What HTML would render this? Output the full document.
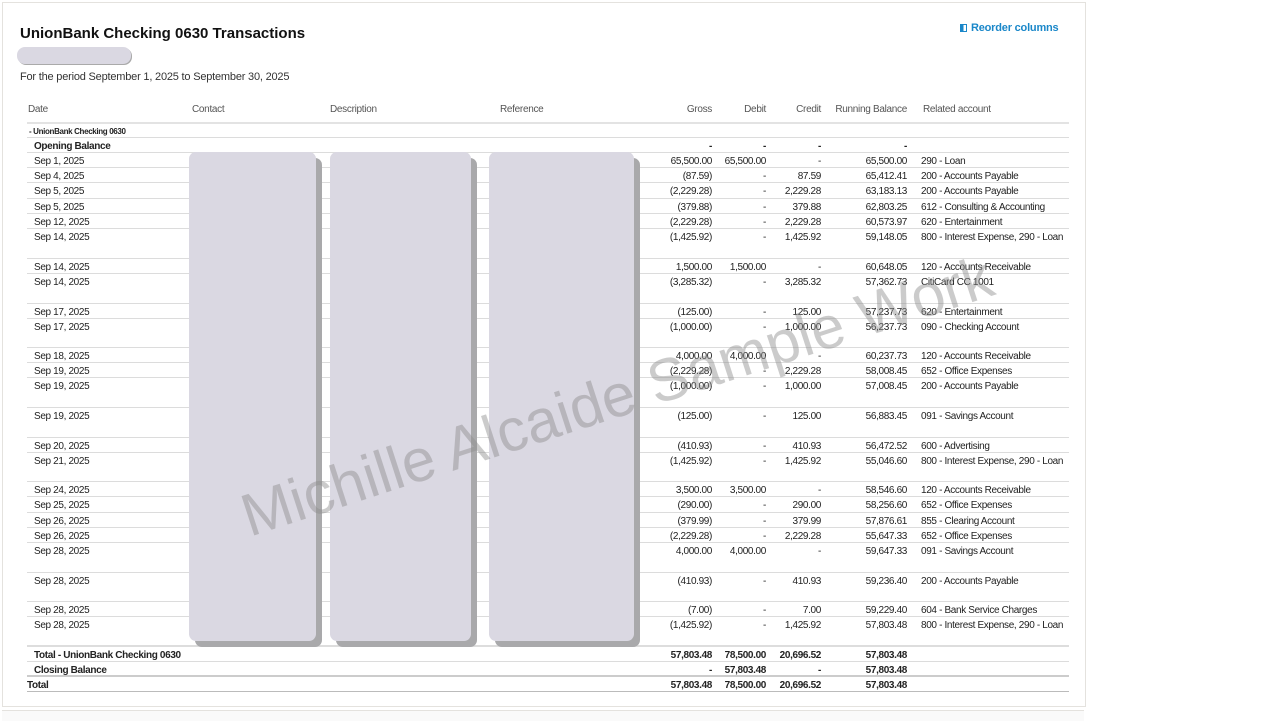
<!DOCTYPE html>
<html><head><meta charset="utf-8"><style>
body{margin:0;width:1280px;height:720px;background:#fff;font-family:"Liberation Sans",Arial,sans-serif;position:relative;overflow:hidden;color:#222}
.card{position:absolute;left:2px;top:2px;width:1082px;height:703px;border:1px solid #e4e2de;background:#fff}
.bot{position:absolute;left:2px;top:710px;width:1082px;height:10px;border-top:1px solid #e4e2de;background:#fafafa}
.t{position:absolute;white-space:nowrap}
.r{position:absolute;left:27px;width:1042px;box-sizing:border-box;border-bottom:1px solid #dcdcdc;font-size:10px;letter-spacing:-0.35px;line-height:14px}
.r span{position:absolute;top:2px;white-space:nowrap}
.d{left:7px}.g{left:613px;width:72px;text-align:right}.db{left:689px;width:50px;text-align:right}.c{left:744px;width:50px;text-align:right}.rb{left:813px;width:67px;text-align:right}.a{left:894px}
.b{font-weight:bold}
.h{position:absolute;top:104px;font-size:10px;color:#555;letter-spacing:-0.3px}
.blk{position:absolute;background:#dad8e2;border-radius:7px;box-shadow:6px 6px 0 #a9a9ab}
</style></head><body>
<div class="card"></div><div class="bot"></div>
<div class="t" style="left:20px;top:25px;font-size:15px;font-weight:bold;color:#111">UnionBank Checking 0630 Transactions</div>
<div style="position:absolute;left:17px;top:47px;width:114px;height:17px;background:#dad8e2;border-radius:8px;box-shadow:1px 1px 0 #aaa"></div>
<div class="t" style="left:20px;top:71px;font-size:11px;color:#333;letter-spacing:-0.2px">For the period September 1, 2025 to September 30, 2025</div>
<div class="t" style="left:960px;top:22px;font-size:11px;color:#1a87c9;font-weight:bold;letter-spacing:-0.2px"><span style="display:inline-block;width:7px;height:8px;border:1px solid #1a87c9;background:linear-gradient(90deg,#1a87c9 50%,#fff 50%);box-sizing:border-box;margin-right:4px;vertical-align:-1px"></span>Reorder columns</div>
<div class="h" style="left:28px">Date</div><div class="h" style="left:192px">Contact</div><div class="h" style="left:330px">Description</div><div class="h" style="left:500px">Reference</div>
<div class="h" style="left:640px;width:72px;text-align:right">Gross</div><div class="h" style="left:716px;width:50px;text-align:right">Debit</div><div class="h" style="left:771px;width:50px;text-align:right">Credit</div><div class="h" style="left:830px;width:77px;text-align:right">Running Balance</div><div class="h" style="left:923px">Related account</div>
<div style="position:absolute;left:27px;top:122px;width:1042px;height:2px;background:#e3e3e3"></div>
<div class="r b" style="top:124px;height:14px;font-size:8px;line-height:12px"><span style="left:2px">- UnionBank Checking 0630</span></div>
<div class="r b" style="top:138px;height:15px"><span class="d">Opening Balance</span><span class="g">-</span><span class="db">-</span><span class="c">-</span><span class="rb">-</span></div>
<div class="r" style="top:153px;height:15px"><span class="d">Sep 1, 2025</span><span class="g">65,500.00</span><span class="db">65,500.00</span><span class="c">-</span><span class="rb">65,500.00</span><span class="a">290 - Loan</span></div>
<div class="r" style="top:168px;height:15px"><span class="d">Sep 4, 2025</span><span class="g">(87.59)</span><span class="db">-</span><span class="c">87.59</span><span class="rb">65,412.41</span><span class="a">200 - Accounts Payable</span></div>
<div class="r" style="top:183px;height:16px"><span class="d">Sep 5, 2025</span><span class="g">(2,229.28)</span><span class="db">-</span><span class="c">2,229.28</span><span class="rb">63,183.13</span><span class="a">200 - Accounts Payable</span></div>
<div class="r" style="top:199px;height:15px"><span class="d">Sep 5, 2025</span><span class="g">(379.88)</span><span class="db">-</span><span class="c">379.88</span><span class="rb">62,803.25</span><span class="a">612 - Consulting &amp; Accounting</span></div>
<div class="r" style="top:214px;height:15px"><span class="d">Sep 12, 2025</span><span class="g">(2,229.28)</span><span class="db">-</span><span class="c">2,229.28</span><span class="rb">60,573.97</span><span class="a">620 - Entertainment</span></div>
<div class="r" style="top:229px;height:30px"><span class="d">Sep 14, 2025</span><span class="g">(1,425.92)</span><span class="db">-</span><span class="c">1,425.92</span><span class="rb">59,148.05</span><span class="a">800 - Interest Expense, 290 - Loan</span></div>
<div class="r" style="top:259px;height:15px"><span class="d">Sep 14, 2025</span><span class="g">1,500.00</span><span class="db">1,500.00</span><span class="c">-</span><span class="rb">60,648.05</span><span class="a">120 - Accounts Receivable</span></div>
<div class="r" style="top:274px;height:30px"><span class="d">Sep 14, 2025</span><span class="g">(3,285.32)</span><span class="db">-</span><span class="c">3,285.32</span><span class="rb">57,362.73</span><span class="a">CitiCard CC 1001</span></div>
<div class="r" style="top:304px;height:15px"><span class="d">Sep 17, 2025</span><span class="g">(125.00)</span><span class="db">-</span><span class="c">125.00</span><span class="rb">57,237.73</span><span class="a">620 - Entertainment</span></div>
<div class="r" style="top:319px;height:29px"><span class="d">Sep 17, 2025</span><span class="g">(1,000.00)</span><span class="db">-</span><span class="c">1,000.00</span><span class="rb">56,237.73</span><span class="a">090 - Checking Account</span></div>
<div class="r" style="top:348px;height:15px"><span class="d">Sep 18, 2025</span><span class="g">4,000.00</span><span class="db">4,000.00</span><span class="c">-</span><span class="rb">60,237.73</span><span class="a">120 - Accounts Receivable</span></div>
<div class="r" style="top:363px;height:15px"><span class="d">Sep 19, 2025</span><span class="g">(2,229.28)</span><span class="db">-</span><span class="c">2,229.28</span><span class="rb">58,008.45</span><span class="a">652 - Office Expenses</span></div>
<div class="r" style="top:378px;height:30px"><span class="d">Sep 19, 2025</span><span class="g">(1,000.00)</span><span class="db">-</span><span class="c">1,000.00</span><span class="rb">57,008.45</span><span class="a">200 - Accounts Payable</span></div>
<div class="r" style="top:408px;height:30px"><span class="d">Sep 19, 2025</span><span class="g">(125.00)</span><span class="db">-</span><span class="c">125.00</span><span class="rb">56,883.45</span><span class="a">091 - Savings Account</span></div>
<div class="r" style="top:438px;height:15px"><span class="d">Sep 20, 2025</span><span class="g">(410.93)</span><span class="db">-</span><span class="c">410.93</span><span class="rb">56,472.52</span><span class="a">600 - Advertising</span></div>
<div class="r" style="top:453px;height:29px"><span class="d">Sep 21, 2025</span><span class="g">(1,425.92)</span><span class="db">-</span><span class="c">1,425.92</span><span class="rb">55,046.60</span><span class="a">800 - Interest Expense, 290 - Loan</span></div>
<div class="r" style="top:482px;height:15px"><span class="d">Sep 24, 2025</span><span class="g">3,500.00</span><span class="db">3,500.00</span><span class="c">-</span><span class="rb">58,546.60</span><span class="a">120 - Accounts Receivable</span></div>
<div class="r" style="top:497px;height:16px"><span class="d">Sep 25, 2025</span><span class="g">(290.00)</span><span class="db">-</span><span class="c">290.00</span><span class="rb">58,256.60</span><span class="a">652 - Office Expenses</span></div>
<div class="r" style="top:513px;height:15px"><span class="d">Sep 26, 2025</span><span class="g">(379.99)</span><span class="db">-</span><span class="c">379.99</span><span class="rb">57,876.61</span><span class="a">855 - Clearing Account</span></div>
<div class="r" style="top:528px;height:15px"><span class="d">Sep 26, 2025</span><span class="g">(2,229.28)</span><span class="db">-</span><span class="c">2,229.28</span><span class="rb">55,647.33</span><span class="a">652 - Office Expenses</span></div>
<div class="r" style="top:543px;height:30px"><span class="d">Sep 28, 2025</span><span class="g">4,000.00</span><span class="db">4,000.00</span><span class="c">-</span><span class="rb">59,647.33</span><span class="a">091 - Savings Account</span></div>
<div class="r" style="top:573px;height:29px"><span class="d">Sep 28, 2025</span><span class="g">(410.93)</span><span class="db">-</span><span class="c">410.93</span><span class="rb">59,236.40</span><span class="a">200 - Accounts Payable</span></div>
<div class="r" style="top:602px;height:15px"><span class="d">Sep 28, 2025</span><span class="g">(7.00)</span><span class="db">-</span><span class="c">7.00</span><span class="rb">59,229.40</span><span class="a">604 - Bank Service Charges</span></div>
<div class="r" style="top:617px;height:30px;border-bottom:2px solid #ddd"><span class="d">Sep 28, 2025</span><span class="g">(1,425.92)</span><span class="db">-</span><span class="c">1,425.92</span><span class="rb">57,803.48</span><span class="a">800 - Interest Expense, 290 - Loan</span></div>
<div class="r b" style="top:647px;height:15px"><span class="d">Total - UnionBank Checking 0630</span><span class="g">57,803.48</span><span class="db">78,500.00</span><span class="c">20,696.52</span><span class="rb">57,803.48</span></div>
<div class="r b" style="top:662px;height:15px;border-bottom:2px solid #ccc"><span class="d">Closing Balance</span><span class="g">-</span><span class="db">57,803.48</span><span class="c">-</span><span class="rb">57,803.48</span></div>
<div class="r b" style="top:677px;height:15px;border-bottom:1px solid #bbb"><span style="left:0">Total</span><span class="g">57,803.48</span><span class="db">78,500.00</span><span class="c">20,696.52</span><span class="rb">57,803.48</span></div>
<div class="blk" style="left:189px;top:152px;width:127px;height:489px"></div>
<div class="blk" style="left:330px;top:152px;width:141px;height:489px"></div>
<div class="blk" style="left:489px;top:152px;width:145px;height:489px"></div>
<div class="t" style="left:617px;top:396px;transform:translate(-50%,-50%) rotate(-18deg);font-size:60px;color:rgba(140,140,140,0.45)">Michille Alcaide Sample Work</div>
</body></html>
